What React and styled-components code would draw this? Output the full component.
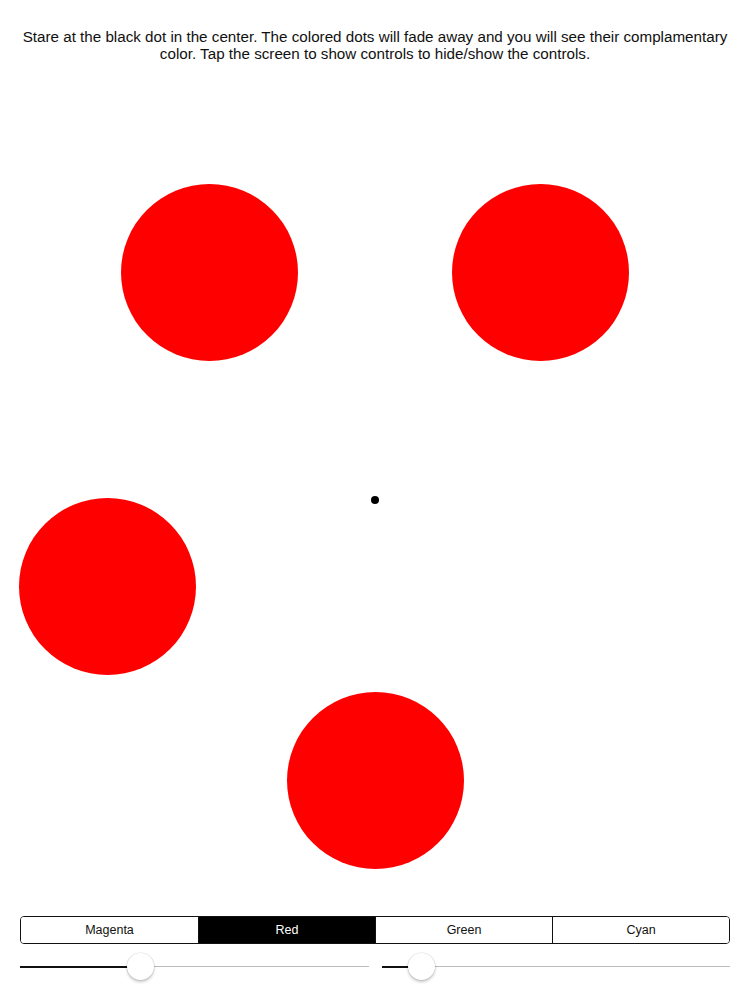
import React from "react";
import styled, { createGlobalStyle } from "styled-components";

const Global = createGlobalStyle`
  html, body { margin: 0; padding: 0; background: #fff; }
  body { font-family: "Liberation Sans", Arial, sans-serif; }
`;

const Page = styled.div`
  width: 750px;
  height: 1000px;
  display: flex;
  flex-direction: column;
  background: #fff;
  overflow: hidden;
`;

const Instructions = styled.p`
  margin: 28px 18px 0;
  text-align: center;
  font-size: 15.2px;
  line-height: 17px;
  color: #111;
`;

const Canvas = styled.div`
  position: relative;
  flex: 1;
`;

const Dot = styled.div`
  position: absolute;
  border-radius: 50%;
  background: ${(p) => p.color};
`;

const Controls = styled.div`
  display: flex;
  flex-direction: column;
  padding: 0 20px 18px;
  gap: 8px;
`;

const Segmented = styled.div`
  display: grid;
  grid-template-columns: repeat(4, 1fr);
  height: 26px;
  border: 1px solid #111;
  border-radius: 4px;
  overflow: hidden;
`;

const Segment = styled.div`
  display: flex;
  align-items: center;
  justify-content: center;
  font-size: 12.5px;
  color: ${(p) => (p.active ? "#fff" : "#111")};
  background: ${(p) => (p.active ? "#000" : "#fff")};
  & + & { border-left: 1px solid #111; }
`;

const SliderRow = styled.div`
  display: flex;
  gap: 13px;
  height: 30px;
  align-items: center;
`;

const Slider = styled.div`
  position: relative;
  flex: 1;
  height: 30px;
`;

const Track = styled.div`
  position: absolute;
  left: 0;
  right: 0;
  top: 14px;
  height: 1px;
  background: #bcbcbc;
`;

const Fill = styled.div`
  position: absolute;
  left: 0;
  top: 13.5px;
  height: 2px;
  background: #111;
`;

const Thumb = styled.div`
  position: absolute;
  top: 1px;
  width: 27px;
  height: 27px;
  margin-left: -13.5px;
  border-radius: 50%;
  background: #fff;
  box-shadow: 0 2px 3px rgba(0, 0, 0, 0.22), 0 0 0 0.5px rgba(0, 0, 0, 0.12);
`;

const dots = [
  { x: 121, y: 184, d: 177 },
  { x: 452, y: 184, d: 177 },
  { x: 19, y: 498, d: 177 },
  { x: 287, y: 692, d: 177 },
];

const segments = ["Magenta", "Red", "Green", "Cyan"];
const CANVAS_TOP = 62;

function RangeSlider({ value, width }) {
  const px = value * width;
  return (
    <Slider>
      <Track />
      <Fill style={{ width: px }} />
      <Thumb style={{ left: px }} />
    </Slider>
  );
}

export default function App() {
  return (
    <Page>
      <Global />
      <Instructions>
        Stare at the black dot in the center. The colored dots will fade away and you will see their complamentary
        color. Tap the screen to show controls to hide/show the controls.
      </Instructions>
      <Canvas>
        {dots.map((c, i) => (
          <Dot
            key={i}
            color="#ff0000"
            style={{ left: c.x, top: c.y - CANVAS_TOP, width: c.d, height: c.d }}
          />
        ))}
        <Dot color="#000" style={{ left: 371, top: 496 - CANVAS_TOP, width: 8, height: 8 }} />
      </Canvas>
      <Controls>
        <Segmented>
          {segments.map((s) => (
            <Segment key={s} active={s === "Red"}>
              {s}
            </Segment>
          ))}
        </Segmented>
        <SliderRow>
          <RangeSlider value={120 / 348} width={348} />
          <RangeSlider value={40 / 349} width={349} />
        </SliderRow>
      </Controls>
    </Page>
  );
}
